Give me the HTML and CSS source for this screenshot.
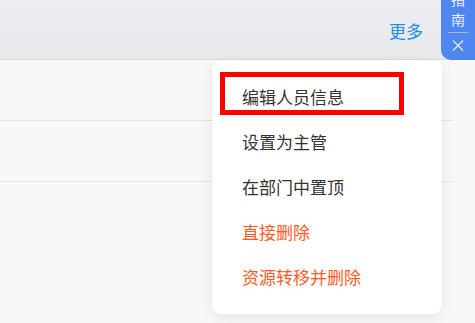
FILE: index.html
```html
<!DOCTYPE html>
<html lang="zh-CN">

<head>
    <meta charset="UTF-8">
    <meta name="viewport" content="width=device-width, initial-scale=1.0">
    <title>成员管理</title>
    <link rel="stylesheet" href="styles.css">
</head>

<body>
    <div class="header">
        <a class="more" href="#">更多</a>
    </div>

    <div class="list">
        <div class="row"></div>
        <div class="row"></div>
        <div class="row last"></div>
    </div>

    <!-- 更多操作下拉菜单 -->
    <ul class="menu">
        <li class="menu-item">编辑人员信息</li>
        <li class="menu-item">设置为主管</li>
        <li class="menu-item">在部门中置顶</li>
        <li class="menu-item danger">直接删除</li>
        <li class="menu-item danger">资源转移并删除</li>
    </ul>
    <div class="highlight"></div>

    <!-- 右上角指南 -->
    <div class="guide">
        <div class="guide-text">指</div>
        <div class="guide-text">南</div>
        <div class="guide-line"></div>
        <svg class="guide-close" width="12" height="11" viewBox="0 0 12 11">
            <path d="M1 0.5 L11 10.5 M11 0.5 L1 10.5" stroke="#e8efff" stroke-width="1.2" fill="none" />
        </svg>
    </div>
</body>

</html>
```

FILE: styles.css
```css
body {
    font-family: "Noto Sans CJK SC", "Noto Sans", sans-serif;
    margin: 0;
    padding: 0;
    background-color: #f8f8f8;
    height: 323px;
    overflow: hidden;
    position: relative;
}

.header {
    height: 60px;
    background: linear-gradient(to bottom, #ecedf0, #e8e9ec);
    border-bottom: 1px solid #d8d9dc;
    box-sizing: border-box;
    display: flex;
    justify-content: flex-end;
    align-items: center;
    padding-right: 52px;
}

.more {
    color: #1a8cf0;
    font-size: 17px;
    text-decoration: none;
    margin-top: 1px;
}

.list {
    margin-right: 22px;
}

.row {
    height: 61px;
    border-bottom: 1px solid #e4e4e4;
    box-sizing: border-box;
}

.row.last {
    border-bottom: none;
}

.menu {
    position: absolute;
    left: 212px;
    top: 60px;
    width: 230px;
    margin: 0;
    padding: 14px 0 15px;
    list-style: none;
    background: #ffffff;
    border-radius: 9px;
    box-shadow: 0 4px 14px rgba(0, 0, 0, 0.08);
}

.menu-item {
    height: 45px;
    line-height: 45px;
    padding-left: 30px;
    font-size: 17px;
    color: #333333;
}

.menu-item.danger {
    color: #ff5a24;
}

.highlight {
    position: absolute;
    left: 220px;
    top: 72px;
    width: 184px;
    height: 43px;
    border: 5px solid #ff0000;
    box-sizing: border-box;
}

.guide {
    position: absolute;
    right: 0;
    top: 0;
    width: 34px;
    height: 60px;
    background-color: #4f86f0;
    border-bottom-left-radius: 10px;
    color: #e8efff;
    text-align: center;
    overflow: hidden;
}

.guide-text {
    font-size: 14px;
    line-height: 20px;
    height: 20px;
}

.guide-text:first-child {
    margin-top: -11px;
}

.guide-line {
    height: 1px;
    width: 20px;
    margin: 3px auto 0;
    background-color: rgba(255, 255, 255, 0.45);
}

.guide-close {
    display: block;
    margin: 7px auto 0;
}
```
